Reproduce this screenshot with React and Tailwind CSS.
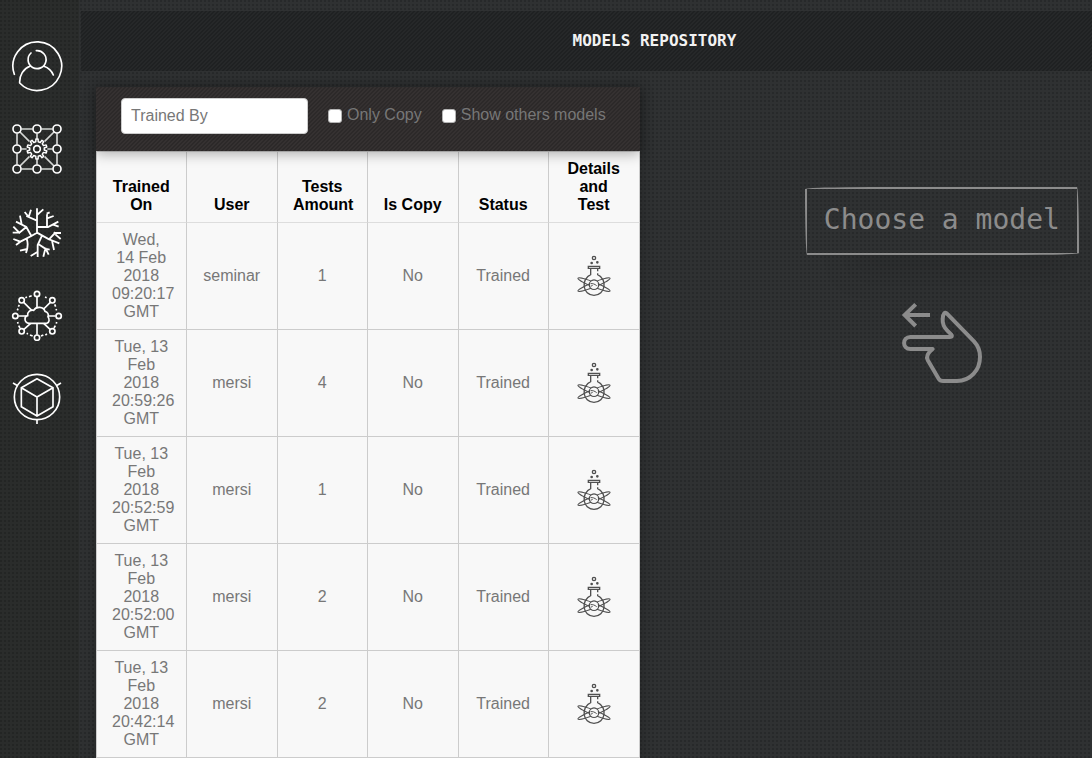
import React from 'react';

const models = [
  { trainedOn: 'Wed, 14 Feb 2018 09:20:17 GMT', user: 'seminar', tests: 1, copy: 'No', status: 'Trained' },
  { trainedOn: 'Tue, 13 Feb 2018 20:59:26 GMT', user: 'mersi', tests: 4, copy: 'No', status: 'Trained' },
  { trainedOn: 'Tue, 13 Feb 2018 20:52:59 GMT', user: 'mersi', tests: 1, copy: 'No', status: 'Trained' },
  { trainedOn: 'Tue, 13 Feb 2018 20:52:00 GMT', user: 'mersi', tests: 2, copy: 'No', status: 'Trained' },
  { trainedOn: 'Tue, 13 Feb 2018 20:42:14 GMT', user: 'mersi', tests: 2, copy: 'No', status: 'Trained' },
];

const headings = ['Trained On', 'User', 'Tests Amount', 'Is Copy', 'Status', 'Details and Test'];

// Outline of a toothed wheel: each tooth is an outer edge followed by an inner one.
function gearPath(cx, cy, outer, inner, teeth) {
  const step = (Math.PI * 2) / teeth;
  const points = [];
  for (let i = 0; i < teeth; i += 1) {
    const a = i * step - Math.PI / 2;
    [[-0.17, outer], [0.17, outer], [0.27, inner], [0.73, inner]].forEach(([t, r]) => {
      points.push(`${(cx + r * Math.cos(a + t * step)).toFixed(1)} ${(cy + r * Math.sin(a + t * step)).toFixed(1)}`);
    });
  }
  return `M${points.join('L')}Z`;
}

function UserIcon() {
  return (
    <svg viewBox="33 30 156 156" className="size-13" fill="none" stroke="currentColor" strokeWidth="5" strokeLinecap="round">
      <path d="M43 133a73 73 0 1 1 16 26c-1-23 11-43 31-50" />
      <path d="M132 109c14 5 23 14 28 26" />
      <path d="M109 62a27 27 0 1 1-16 7" />
    </svg>
  );
}

function NetworkIcon() {
  const nodes = [[51, 297], [111, 297], [171, 297], [51, 357], [171, 357], [51, 417], [111, 417], [171, 417]];
  return (
    <svg viewBox="33 279 156 156" className="size-13" fill="none" stroke="currentColor" strokeWidth="5">
      <path className="text-[#d4d6d4]" d="M64 297h34M124 297h34M64 417h34M124 417h34M51 310v34M51 370v34M171 310v34M171 370v34M60 306l28 28M162 306l-28 28M60 408l28-28M162 408l-28-28M111 310v16M111 388v16M64 357h16M142 357h16" />
      {nodes.map(([x, y]) => <circle key={`${x}-${y}`} cx={x} cy={y} r="12" />)}
      <circle cx="111" cy="357" r="10" />
      <path strokeWidth="4.5" strokeLinejoin="round" d={gearPath(111, 357, 30, 22, 10)} />
    </svg>
  );
}

function NeuronIcon() {
  return (
    <svg viewBox="33 18 156 156" className="size-13" fill="none" stroke="currentColor" strokeWidth="5.5">
      <path d="M111 25v75M111 45l19-17M111 62l-32-14M86 51l7-22M86 51l-12-15M111 81h33l31-16M141 81v-38M141 55l20-7M140 41l9-4M158 73l18 7M111 98l-17 10-15-27-31-16M65 73l-5-26M79 81l-21 17-18-18M58 98H38M94 108l-33 17-21-8M61 125l-13 10M80 116c5 14 4 27-2 43M82 147l-22 5M111 98l36 20 18-19h18M165 99l-4-2M166 103l16 14M145 117l33 13M156 122l6 28M126 107l-13 28v36M116 133l20 13-6 24M136 144l10 20M135 146l14 3M112 156l-20 12" />
    </svg>
  );
}

function CloudIcon() {
  const nodes = [[111, 282], [157, 301], [176, 348], [157, 394], [111, 413], [65, 394], [46, 348], [65, 301]];
  return (
    <svg viewBox="33 267 156 156" className="size-13" fill="none" stroke="currentColor" strokeWidth="5">
      {nodes.map(([x, y]) => <circle key={`${x}-${y}`} cx={x} cy={y} r="8" />)}
      <path d="M88 370c-9-1-13-7-13-13 0-5 3-9 8-10-2-11 8-18 18-16 7-13 30-12 34 3 8 2 12 9 9 16 5 7 5 18-4 20z" />
      <path d="M111 291v32M151 307l-20 20M71 307l25 25M55 348h25M144 348h23M111 370v34M92 370l-21 19M131 370l20 19" />
      <path d="M76 293l5-2M87 290l8-3M135 291l5 2M164 313l3 7M168 327l2 4M170 366l-1 5M166 377l-4 7M141 402l-5 3M130 405l-7 3M98 408l-8-3M84 402l-4-2M60 384l-4-7M54 371l-1-5M52 331l2-5M55 320l3-5" />
    </svg>
  );
}

function CubeIcon() {
  return (
    <svg viewBox="33 96 156 156" className="size-13" fill="none" stroke="currentColor" strokeWidth="5">
      <circle cx="111" cy="171" r="68" />
      <path d="M111 116l48 27v57l-48 28-47-28v-57zM64 143l47 28 48-28M111 171v57M39 129l14 8M183 129l-14 8M111 238v14" />
    </svg>
  );
}

function FlaskIcon() {
  return (
    <svg viewBox="108 312 108 132" className="mx-auto block h-11 w-9" fill="none" stroke="#505050" strokeWidth="4">
      <circle cx="162" cy="324" r="5" />
      <circle cx="155" cy="339" r="2" />
      <circle cx="172" cy="337" r="2" />
      <path d="M145 349h34v6h-34zM152 356v18c-31 14-24 62 10 62s42-48 11-62v-4M173 356v8" />
      <circle cx="162" cy="404" r="14" />
      <ellipse cx="162" cy="404" rx="52" ry="7" strokeWidth="3" transform="rotate(22 162 404)" />
      <ellipse cx="162" cy="404" rx="52" ry="7" strokeWidth="3" transform="rotate(-22 162 404)" />
      <circle cx="162" cy="404" r="12" fill="#f8f8f8" stroke="none" />
      <path strokeWidth="3" d="M152 401c6-1 12 1 18 6M152 409l6-3" />
    </svg>
  );
}

function SwipeHandIcon() {
  return (
    <svg viewBox="300 366 252 252" className="size-21" fill="none" stroke="#8c8c8c" strokeWidth="12">
      <path d="M390 405h-76M347 373l-33 32 33 33" />
      <path strokeLinejoin="round" d="M331 471h119c6 0 8-3 4-7l-12-12c-12-12-15-22-14-35 1-17 7-22 13-16l81 83c12 13 18 28 18 46 0 41-29 73-69 73h-42c-6 0-10-2-13-7l-33-56c-6-13 1-22 15-33h-67c-25 0-25-36 0-36z" />
    </svg>
  );
}

const navigation = [
  ['Profile', UserIcon],
  ['Network builder', NetworkIcon],
  ['Neurons', NeuronIcon],
  ['Cloud', CloudIcon],
  ['Models', CubeIcon],
];

function Filter({ id, label }) {
  return (
    <div className="flex items-center gap-[5px]">
      <input
        id={id}
        type="checkbox"
        className="size-3.5 appearance-none rounded-[3px] border border-[#b5b5b5] bg-white checked:bg-blue-500"
      />
      <label htmlFor={id} className="pb-0.5 whitespace-nowrap">{label}</label>
    </div>
  );
}

function Cell({ children }) {
  return <td className="border-r border-b border-[#cccccc] py-2 pr-4 pl-[15px]">{children}</td>;
}

export default function App() {
  return (
    <div className="flex min-h-screen bg-[#2f3132] bg-[radial-gradient(circle_at_1px_1px,#27292a_1px,transparent_1px)] bg-[size:4px_4px] font-['Liberation_Sans',Arial,sans-serif] text-base leading-[18px] text-[#777777]">
      <nav className="w-[79px] shrink-0 bg-[#2a2c2b] bg-[radial-gradient(circle_at_1px_1px,#232524_1px,transparent_1px)] bg-[size:4px_4px] pt-10 pl-[11px]">
        <ul className="flex flex-col gap-[31px]">
          {navigation.map(([name, Icon]) => (
            <li key={name}>
              <a href="#" aria-label={name} className="block text-white"><Icon /></a>
            </li>
          ))}
        </ul>
      </nav>

      <div className="min-w-0 grow pt-[11px] pl-0.5">
        <header className="flex h-15 items-center justify-center bg-[#262829] bg-[linear-gradient(135deg,#1f2122_25%,transparent_25%_50%,#1f2122_50%_75%,transparent_75%)] bg-[size:4px_4px] pl-[136px]">
          <h1 className="font-['DejaVu_Sans_Mono',monospace] text-base font-bold text-[#f2f2f2]">MODELS REPOSITORY</h1>
        </header>

        <main className="grid grid-cols-[544fr_452fr] pt-4 pl-[15px]">
          <section className="shadow-[0_0_12px_rgba(0,0,0,0.25)]">
            <form className="relative flex h-16 items-center gap-5 bg-[#353131] bg-[linear-gradient(135deg,#2c2929_25%,transparent_25%_50%,#2c2929_50%_75%,transparent_75%)] bg-[size:4px_4px] pb-1.5 pl-[25px] shadow-[0_3px_12px_rgba(0,0,0,0.3)]">
              <input
                type="text"
                aria-label="Trained By"
                placeholder="Trained By"
                className="h-9 w-[187px] rounded border border-[#cccccc] bg-white px-[9px] text-[#555555] placeholder:text-[#777777]"
              />
              <Filter id="only-copy" label="Only Copy" />
              <Filter id="show-others" label="Show others models" />
            </form>
            <table className="w-full table-fixed border-separate border-spacing-0 border-t border-l border-[#cccccc] bg-[#f8f8f8] text-center">
              <thead>
                <tr>
                  {headings.map((heading) => (
                    <th key={heading} className="border-r border-b border-[#cccccc] border-b-[#dddddd] py-2 pr-4 pl-[15px] align-bottom font-bold text-black">
                      {heading}
                    </th>
                  ))}
                </tr>
              </thead>
              <tbody>
                {models.map((model) => (
                  <tr key={model.trainedOn}>
                    <Cell>{model.trainedOn}</Cell>
                    <Cell>{model.user}</Cell>
                    <Cell>{model.tests}</Cell>
                    <Cell>{model.copy}</Cell>
                    <Cell>{model.status}</Cell>
                    <Cell>
                      <button type="button" aria-label="Details and test" className="block w-full"><FlaskIcon /></button>
                    </Cell>
                  </tr>
                ))}
              </tbody>
            </table>
          </section>

          <aside className="flex justify-end pt-[100px] pr-[13px]">
            <div className="flex flex-col items-center gap-[47px]">
              <p className="rounded-[255px_8px_225px_8px/8px_225px_8px_255px] border-2 border-[#8c8c8c] px-[17px] pt-[13px] pb-[15px] font-['DejaVu_Sans_Mono',monospace] text-[28px] leading-9 whitespace-nowrap text-[#8c8c8c] shadow-[20px_38px_34px_-26px_rgba(0,0,0,0.2)]">
                Choose a model
              </p>
              <SwipeHandIcon />
            </div>
          </aside>
        </main>
      </div>
    </div>
  );
}
